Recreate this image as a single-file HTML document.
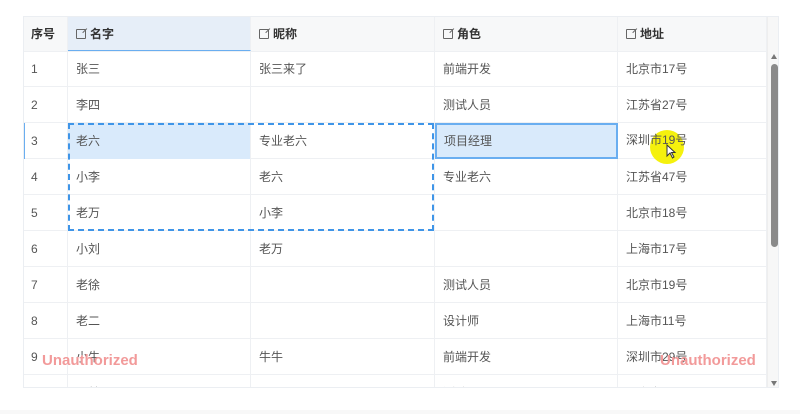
<!DOCTYPE html>
<html><head><meta charset="utf-8"><style>
*{margin:0;padding:0;box-sizing:border-box}
body{width:800px;height:414px;background:#fff;font-family:"Liberation Sans","Noto Sans CJK SC",sans-serif;position:relative;overflow:hidden}
.tbl{position:absolute;left:23px;top:16px;width:756px;height:372px;border:1px solid #ebeef2;overflow:hidden;background:#fff}
.row{position:absolute;left:0;height:36px;width:743px;border-bottom:1px solid #eef0f3}
.c{position:absolute;top:0;height:36px;line-height:36px;font-size:12px;color:#555;padding-left:8px;border-right:1px solid #eef0f3;white-space:nowrap}
.h .c{font-weight:bold;color:#333;background:#f7f8f9;height:34px;line-height:34px;font-size:12px}
.c0{left:0;width:44px;padding-left:7px}.c1{left:44px;width:183px}.c2{left:227px;width:184px}.c3{left:411px;width:183px}.c4{left:594px;width:149px}
.ic{display:inline-block;width:10px;height:10px;border:1.2px solid #666;border-radius:1px;margin-right:4px;vertical-align:-1px;position:relative}
.ic:after{content:"";position:absolute;right:-2px;top:-2px;width:6px;height:1.3px;background:#666;transform:rotate(-45deg);transform-origin:right}
.sb{position:absolute;left:743px;top:0;width:13px;height:372px;background:#f7f7f7;border-left:1px solid #eee}
.un{position:absolute;font-weight:bold;font-size:15px;color:#f29a9a;font-family:"Liberation Sans",sans-serif}
</style></head><body>
<div class="tbl">
<div class="row h" style="top:0;height:35px">
<div class="c c0">序号</div>
<div class="c c1" style="background:#e6eef8;border-bottom:1px solid #6aaef0"><span class="ic"></span>名字</div>
<div class="c c2"><span class="ic"></span>昵称</div>
<div class="c c3"><span class="ic"></span>角色</div>
<div class="c c4"><span class="ic"></span>地址</div>
</div>
<div class="row" style="top:34px"><div class="c c0">1</div><div class="c c1">张三</div><div class="c c2">张三来了</div><div class="c c3">前端开发</div><div class="c c4">北京市17号</div></div>
<div class="row" style="top:70px"><div class="c c0">2</div><div class="c c1">李四</div><div class="c c2"></div><div class="c c3">测试人员</div><div class="c c4">江苏省27号</div></div>
<div class="row" style="top:106px"><div class="c c0" style="box-shadow:inset 1px 0 0 #6aaef0">3</div><div class="c c1" style="background:#d9eafb">老六</div><div class="c c2">专业老六</div><div class="c c3" style="background:#d9eafb;border:2px solid #6aaef0;line-height:32px;padding-left:7px">项目经理</div><div class="c c4"></div></div>
<div class="row" style="top:142px"><div class="c c0">4</div><div class="c c1">小李</div><div class="c c2">老六</div><div class="c c3">专业老六</div><div class="c c4">江苏省47号</div></div>
<div class="row" style="top:178px"><div class="c c0">5</div><div class="c c1">老万</div><div class="c c2">小李</div><div class="c c3"></div><div class="c c4">北京市18号</div></div>
<div class="row" style="top:214px"><div class="c c0">6</div><div class="c c1">小刘</div><div class="c c2">老万</div><div class="c c3"></div><div class="c c4">上海市17号</div></div>
<div class="row" style="top:250px"><div class="c c0">7</div><div class="c c1">老徐</div><div class="c c2"></div><div class="c c3">测试人员</div><div class="c c4">北京市19号</div></div>
<div class="row" style="top:286px"><div class="c c0">8</div><div class="c c1">老二</div><div class="c c2"></div><div class="c c3">设计师</div><div class="c c4">上海市11号</div></div>
<div class="row" style="top:322px"><div class="c c0">9</div><div class="c c1">小牛</div><div class="c c2">牛牛</div><div class="c c3">前端开发</div><div class="c c4">深圳市29号</div></div>
<div class="row" style="top:358px"><div class="c c0">10</div><div class="c c1">小林</div><div class="c c2"></div><div class="c c3">测试人员</div><div class="c c4">北京市17号</div></div>
<div style="position:absolute;left:44px;top:106px;width:366px;height:108px;border:2.5px dashed #3f95e8"></div>
<div class="sb">
<div style="position:absolute;left:3px;top:37px;width:0;height:0;border-left:3.5px solid transparent;border-right:3.5px solid transparent;border-bottom:5px solid #777"></div>
<div style="position:absolute;left:3px;top:47px;width:7px;height:183px;background:#8a8a8a;border-radius:4px"></div>
<div style="position:absolute;left:3px;top:364px;width:0;height:0;border-left:3.5px solid transparent;border-right:3.5px solid transparent;border-top:5px solid #777"></div>
</div>
</div>
<div style="position:absolute;left:650px;top:130px;width:34px;height:34px;border-radius:50%;background:#f4f000;opacity:.95"></div>
<div style="position:absolute;left:626px;top:133px;font-size:12px;color:#555;line-height:14px">深圳市19号</div>
<svg style="position:absolute;left:666px;top:144px" width="12" height="16"><path d="M1 1 L1 12 L4 9 L6.5 14 L8 13 L5.5 8.5 L9 8.5 Z" fill="#fff" stroke="#333" stroke-width="1"/></svg>
<div class="un" style="left:42px;top:352px">Unauthorized</div>
<div class="un" style="left:660px;top:352px">Unauthorized</div>
<div style="position:absolute;left:0;top:410px;width:800px;height:4px;background:#f8f8f8"></div>
</body></html>
